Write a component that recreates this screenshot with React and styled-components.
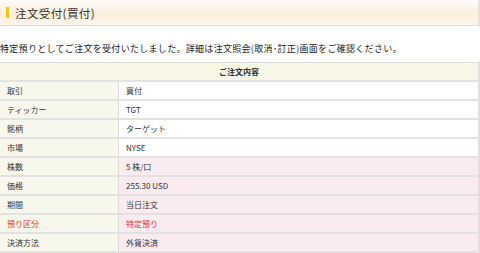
import styled, { createGlobalStyle } from "styled-components";

const Global = createGlobalStyle`
  body {
    margin: 0;
    background: #fff;
    font-family: "Noto Sans CJK JP", "Liberation Sans", sans-serif;
    color: #333;
  }
`;

const Page = styled.div`
  width: 480px;
`;

const Header = styled.div`
  height: 25px;
  display: flex;
  align-items: center;
  gap: 6px;
  padding-left: 6px;
  background: linear-gradient(#fefcf9 0%, #fcefdc 55%, #fdf5ec 100%);
  border-right: 2px solid #e2e2e2;
  border-bottom: 1px solid #dedede;
`;

const Mark = styled.span`
  width: 3px;
  height: 11px;
  background: #f5c518;
`;

const Title = styled.h1`
  margin: 0;
  font-size: 11.5px;
  font-weight: normal;
  color: #333;
  letter-spacing: 0.4px;
`;

const Message = styled.p`
  margin: 0;
  padding: 16px 0 7px;
  font-size: 9px;
  line-height: 13px;
  color: #222;
  letter-spacing: 0.3px;
  white-space: nowrap;
`;

const Table = styled.div`
  border-top: 1px solid #dedede;
  border-right: 2px solid #e0e0e0;
  font-size: 8px;
`;

const Caption = styled.div`
  height: 17px;
  display: flex;
  align-items: center;
  justify-content: center;
  background: #f8f7e6;
  font-weight: bold;
  color: #333;
  border-bottom: 2px solid #e3e3e3;
`;

const Row = styled.div`
  display: grid;
  grid-template-columns: 119px 1fr;
  height: 17px;
  border-bottom: 2px solid #e3e1e1;
  color: ${(p) => (p.$alert ? "#e42f2f" : "#333")};
`;

const Label = styled.div`
  display: flex;
  align-items: center;
  padding-left: 7px;
  background: #f8f7eb;
  border-right: 1px solid #dcdcdc;
`;

const Value = styled.div`
  display: flex;
  align-items: center;
  padding-left: 7px;
  background: ${(p) => (p.$pink ? "#f9ebef" : "#fff")};
`;

const rows = [
  { label: "取引", value: "買付" },
  { label: "ティッカー", value: "TGT" },
  { label: "銘柄", value: "ターゲット" },
  { label: "市場", value: "NYSE" },
  { label: "株数", value: "5 株/口", pink: true },
  { label: "価格", value: "255.30 USD", pink: true },
  { label: "期間", value: "当日注文", pink: true },
  { label: "預り区分", value: "特定預り", pink: true, alert: true },
  { label: "決済方法", value: "外貨決済", pink: true },
];

export default function App() {
  return (
    <Page>
      <Global />
      <Header>
        <Mark />
        <Title>注文受付(買付)</Title>
      </Header>
      <Message>
        特定預りとしてご注文を受付いたしました。詳細は注文照会(取消･訂正)画面をご確認ください。
      </Message>
      <Table>
        <Caption>ご注文内容</Caption>
        {rows.map((r) => (
          <Row key={r.label} $alert={r.alert}>
            <Label>{r.label}</Label>
            <Value $pink={r.pink}>{r.value}</Value>
          </Row>
        ))}
      </Table>
    </Page>
  );
}
